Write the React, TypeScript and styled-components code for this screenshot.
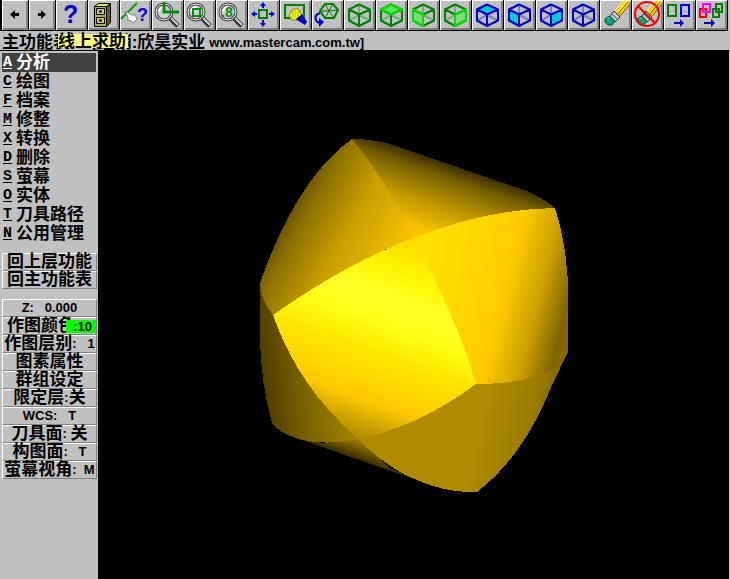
import React from "react";
import styled, { createGlobalStyle } from "styled-components";

const GlobalStyle = createGlobalStyle`
  * { box-sizing: border-box; }
  body { margin: 0; background: #000; }
`;

const uiFont = `"Liberation Sans", "Noto Sans CJK SC", sans-serif`;

const Window = styled.div`
  display: flex;
  flex-direction: column;
  min-height: 100vh;
  color: #000;
  background: #c0c0c0;
  font: bold 17px/17px ${uiFont};
`;

const Toolbar = styled.div`
  display: flex;
  height: 31px;
  border-left: 2px solid #000;
`;

const ToolButton = styled.button<{ $narrow?: boolean }>`
  flex: 0 0 ${(p) => (p.$narrow ? 27 : 32)}px;
  height: 31px;
  padding: 0;
  border: 0;
  border-right: 1px solid #000;
  border-bottom: 1px solid #000;
  background: #c0c0c0;
  box-shadow: inset 1px 1px #fff, inset -2px -2px #808080;
  overflow: hidden;
`;

const Icon = styled.svg`
  display: block;
  width: 32px;
  height: 30px;
`;

const StatusBar = styled.header`
  position: relative;
  display: flex;
  align-items: center;
  height: 19px;
  padding: 3px 2px 0;
  white-space: nowrap;
`;

const StatusTitle = styled.span`
  width: 90px;
`;

const Latin = styled.span`
  font-size: 13px;
`;

const Address = styled(Latin)`
  margin-left: 4px;
`;

const Tooltip = styled.span`
  position: absolute;
  left: 58px;
  top: 3px;
  width: 70px;
  height: 14px;
  line-height: 15px;
  background: #ffff80;
`;

const Body = styled.div`
  display: flex;
  flex: 1;
  margin-right: 1px;
`;

const Sidebar = styled.aside`
  flex: 0 0 98px;
  padding: 2px 1px 0 2px;
  border-top: 1px solid #000;
  background: #c0c0c0;
`;

const Menu = styled.nav`
  display: flex;
  flex-direction: column;
  padding-right: 1px;
`;

const MenuItem = styled.button<{ $active?: boolean }>`
  display: flex;
  align-items: center;
  gap: 4px;
  height: 19px;
  padding: 0 1px;
  border: 0;
  font: inherit;
  white-space: nowrap;
  color: ${(p) => (p.$active ? "#fff" : "#000")};
  background: ${(p) => (p.$active ? "#404040" : "transparent")};
`;

const Hotkey = styled.u`
  font: bold 15px/17px "Liberation Mono", monospace;
  text-underline-offset: 2px;
`;

const Group = styled.div`
  display: flex;
  flex-direction: column;
  margin-top: 10px;
`;

const PanelButton = styled.button`
  position: relative;
  display: flex;
  align-items: center;
  justify-content: center;
  height: 18px;
  padding: 0;
  border: 1px solid;
  border-color: #fff #808080 #808080 #fff;
  background: #c0c0c0;
  color: #000;
  font: inherit;
  line-height: 16px;
  white-space: pre;
`;

const ColorLabel = styled.span`
  flex: 1;
  padding-left: 4px;
  text-align: left;
`;

const Swatch = styled(Latin)`
  position: absolute;
  right: 0;
  top: 2px;
  width: 30px;
  height: 13px;
  padding-right: 4px;
  line-height: 13px;
  text-align: right;
  background: #00ff00;
`;

const Viewport = styled.main`
  display: flex;
  flex: 1;
  align-items: center;
  justify-content: center;
  background: #000;
`;

const Model = styled.svg`
  display: block;
  width: 310px;
  height: 356px;
`;

const GREEN = "#008000";
const LIME = "#00e000";
const BLUE = "#0000c0";

type Face = "top" | "left" | "right";

function Cube({ stroke, fill, face, accent }: { stroke: string; fill?: string; face?: Face; accent?: string }) {
  const faces: Record<Face, string> = {
    top: "M15 4.500 26 9.500 15 14.500 5 9.500Z",
    left: "M5 9.500 15 14.500V26L5 20.500Z",
    right: "M26 9.500 15 14.500V26L26 20.500Z",
  };
  return (
    <g fill="none" strokeWidth="2" strokeLinejoin="round">
      <path d="M15 4V15M5 20.500 15 15 26 20.500" stroke={stroke} opacity=".35" />
      {face && <path d={faces[face]} fill={fill} />}
      <path d="M15 4.500 26 9.500V20.500L15 26 5 20.500V9.500ZM5 9.500 15 14.500 26 9.500M15 14.500V26" stroke={stroke} />
      {face && accent && <path d={faces[face]} stroke={accent} />}
    </g>
  );
}

function Lens({ children }: { children?: React.ReactNode }) {
  return (
    <g fill="none">
      <path d="M18 18 26 26" stroke="#303030" strokeWidth="5" />
      <path d="M18 17 26 25" stroke="#d0d0d0" strokeWidth="2" />
      <circle cx="12" cy="12" r="8" fill="#d0d0d0" stroke="#404040" strokeWidth="3" />
      <circle cx="12" cy="12" r="8" stroke="#f0f0f0" strokeWidth="1" />
      <path d="M7 11A5 5 0 0 1 12 7" stroke="#fff" strokeWidth="2" />
      {children}
    </g>
  );
}

function Pencil() {
  return (
    <g>
      <path d="M14 12 23 1H31L19 17Z" fill="#ffd000" />
      <path d="M14 12 23 1M16 14 27 1" stroke="#fff080" />
      <path d="M19 17 30 4M17 15 28 2" stroke="#806000" />
      <path d="M10 16 14 11 20 17 15 22Z" fill="#c8c8c8" stroke="#303030" />
      <path d="M12 14 17 19M10 16 15 21" stroke="#505050" />
      <path d="M5 19 9 16 15 21 12 25H8L5 22Z" fill="#00a078" stroke="#005840" />
      <path d="M7 19 10 18" stroke="#60e0b0" />
    </g>
  );
}

const mark = { fontFamily: "Liberation Sans", fontWeight: 700 };

const viewTools: { label: string; icon: React.ReactNode }[] = [
  { label: "Help", icon: <text x="7" y="23" fontSize="25" fill="#0000d0" {...mark}>?</text> },
  {
    label: "File",
    icon: (
      <g stroke="#000">
        <path d="M6.500 6.500 10.500 3.500H22.500L18.500 6.500Z" fill="#e8e070" />
        <path d="M18.500 6.500 22.500 3.500V22.500L18.500 26.500Z" fill="#686000" />
        <path d="M6.500 6.500H18.500V26.500H6.500Z" fill="#b8b040" />
        <path d="M8.500 8.500H16.500V14.500H8.500ZM8.500 17.500H16.500V23.500H8.500Z" fill="#d0c858" />
        <path d="M11 11.500H14M11 20.500H14" strokeWidth="2" />
      </g>
    ),
  },
  {
    label: "Analyze",
    icon: (
      <g>
        <path d="M1 19 17 3" stroke="#00a000" strokeWidth="2" />
        <path d="M5 11 12 15 15 15 17 19 13 23 10 20 8 21 8 17Z" fill="#fff" stroke="#808080" />
        <text x="17" y="21" fontSize="18" fill="#0000e0" {...mark}>?</text>
      </g>
    ),
  },
  { label: "Zoom target", icon: <Lens><path d="M12 2V12H27" stroke="#009010" strokeWidth="3" /></Lens> },
  { label: "Zoom window", icon: <Lens><path d="M9 9H16V16H9Z" stroke="#009010" strokeWidth="2" /></Lens> },
  { label: "Zoom 0.8", icon: <Lens><text x="5" y="17" fontSize="14" fill="#009010" {...mark}>.8</text></Lens> },
  {
    label: "Fit",
    icon: (
      <g fill="none" strokeWidth="2">
        <path d="M11 10H19V18H11Z" stroke={GREEN} />
        <path d="M15 8V4M15 20V25M9 14H4M21 14H26" stroke="#0000e0" />
        <path d="M12 6 15 2 18 6ZM12 23 15 27 18 23ZM7 11 3 14 7 17ZM23 11 27 14 23 17Z" fill="#0000e0" />
      </g>
    ),
  },
  {
    label: "Repaint",
    icon: (
      <g>
        <path d="M5 5H24V18H5Z" fill="none" stroke={GREEN} strokeWidth="2" />
        <path d="M9 16 12 10 17 8 22 15 18 20 12 20Z" fill="#ffff00" stroke="#808000" />
        <path d="M13 11 12 18M15 10 15 18M18 11 18 17" stroke="#b0b000" />
        <path d="M16 19 22 14 24 17 27 22 25 25 20 22Z" fill="#0000d0" />
      </g>
    ),
  },
  {
    label: "Dynamic rotate",
    icon: (
      <g fill="none">
        <path d="M13 4H21L26 10 22 18H13L8 11Z" stroke={GREEN} strokeWidth="2" />
        <path d="M8 11H17L26 10M17 11 13 4M17 11 21 4M17 11 13 18M17 11 22 18" stroke={GREEN} />
        <path d="M8 13C1 15 3 22 8 23" stroke="#0000c0" strokeWidth="2" />
        <path d="M7 18 12 22 7 27Z" fill="#0000e0" />
      </g>
    ),
  },
  { label: "Isometric view", icon: <Cube stroke={GREEN} /> },
  { label: "Top view", icon: <Cube stroke={GREEN} face="top" fill="#60e060" accent={LIME} /> },
  { label: "Front view", icon: <Cube stroke={GREEN} face="left" fill="#80d880" accent={LIME} /> },
  { label: "Side view", icon: <Cube stroke={GREEN} face="right" fill="#80d880" accent={LIME} /> },
  { label: "Top plane", icon: <Cube stroke={BLUE} face="top" fill="#00c8d8" /> },
  { label: "Front plane", icon: <Cube stroke={BLUE} face="left" fill="#00c8d8" /> },
  { label: "Side plane", icon: <Cube stroke={BLUE} face="right" fill="#00c8d8" /> },
  { label: "3D plane", icon: <Cube stroke={BLUE} /> },
  { label: "Delete", icon: <Pencil /> },
  {
    label: "Undelete",
    icon: (
      <g>
        <Pencil />
        <g fill="none" stroke="#f00000" strokeWidth="2">
          <circle cx="15" cy="14" r="12" />
          <path d="M6 6 23 23" />
        </g>
      </g>
    ),
  },
  {
    label: "Change colour",
    icon: (
      <g fill="none" strokeWidth="2">
        <path d="M4 5H12V16H4Z" stroke={GREEN} />
        <path d="M17 5H25V16H17Z" stroke="#0000e0" />
        <path d="M10 23H17" stroke={BLUE} />
        <path d="M16 19 20 23 16 27Z" fill={BLUE} />
      </g>
    ),
  },
  {
    label: "Copy colour",
    icon: (
      <g fill="none" strokeWidth="2">
        <path d="M4 9H10V17H4Z" stroke="#f00000" />
        <path d="M7 4H14V12H7Z" stroke="#ff00ff" />
        <path d="M17 9H23V17H17ZM20 4H26V12H20Z" stroke={GREEN} />
        <path d="M8 23H16" stroke={BLUE} />
        <path d="M15 19 19 23 15 27Z" fill={BLUE} />
      </g>
    ),
  },
];

const menuItems = [
  ["A", "分析"],
  ["C", "绘图"],
  ["F", "档案"],
  ["M", "修整"],
  ["X", "转换"],
  ["D", "删除"],
  ["S", "萤幕"],
  ["O", "实体"],
  ["T", "刀具路径"],
  ["N", "公用管理"],
];

const settings: [string, string][] = [
  ["作图层别", ":   1"],
  ["图素属性", ""],
  ["群组设定", ""],
];

const planes: [string, string][] = [
  ["刀具面", ": "],
  ["构图面", ":   T"],
  ["萤幕视角", ":  M"],
];

function Solid() {
  return (
    <Model viewBox="259 137 310 356" shapeRendering="crispEdges" role="img" aria-label="Shaded solid">
      <defs>
        <linearGradient id="upperLeft" gradientUnits="userSpaceOnUse" x1="273" y1="216" x2="398" y2="285">
          <stop offset="0" stopColor="#4c3c00" />
          <stop offset=".2" stopColor="#8c7000" />
          <stop offset=".5" stopColor="#c79d00" />
          <stop offset=".85" stopColor="#f0bc00" />
          <stop offset="1" stopColor="#ffc800" />
        </linearGradient>
        <linearGradient id="upperRight" gradientUnits="userSpaceOnUse" x1="461" y1="164" x2="433" y2="246">
          <stop offset="0" stopColor="#2c2200" />
          <stop offset=".2" stopColor="#755d00" />
          <stop offset=".5" stopColor="#b89200" />
          <stop offset=".85" stopColor="#f5c000" />
          <stop offset="1" stopColor="#ffc800" />
        </linearGradient>
        <linearGradient id="right" gradientUnits="userSpaceOnUse" x1="430" y1="260" x2="570" y2="296">
          <stop offset="0" stopColor="#ffe000" />
          <stop offset=".55" stopColor="#ffcb00" />
          <stop offset=".8" stopColor="#cba000" />
          <stop offset="1" stopColor="#806500" />
        </linearGradient>
        <linearGradient id="center" gradientUnits="userSpaceOnUse" x1="420" y1="243" x2="352" y2="438">
          <stop offset="0" stopColor="#ffd900" />
          <stop offset=".16" stopColor="#fff500" />
          <stop offset=".3" stopColor="#ffff28" />
          <stop offset=".42" stopColor="#ffff18" />
          <stop offset=".56" stopColor="#ffe900" />
          <stop offset=".8" stopColor="#ffc900" />
          <stop offset="1" stopColor="#aa8700" />
        </linearGradient>
        <linearGradient id="lowerRight" gradientUnits="userSpaceOnUse" x1="480" y1="430" x2="568" y2="450">
          <stop offset="0" stopColor="#ae8b00" />
          <stop offset=".5" stopColor="#9c7c00" />
          <stop offset="1" stopColor="#665000" />
        </linearGradient>
        <linearGradient id="lowerLeft" gradientUnits="userSpaceOnUse" x1="260" y1="370" x2="350" y2="360">
          <stop offset="0" stopColor="#4c3c00" />
          <stop offset=".5" stopColor="#806600" />
          <stop offset="1" stopColor="#a58400" />
        </linearGradient>
        <linearGradient id="under" gradientUnits="userSpaceOnUse" x1="352" y1="459" x2="358" y2="442">
          <stop offset="0" stopColor="#302600" />
          <stop offset="1" stopColor="#947500" />
        </linearGradient>
      </defs>
      <path d="M390 225H435V260H390Z" fill="#ffce00" />
      <path d="M293 437 322 443 358 438 390 468 417 480Z" fill="url(#under)" />
      <path d="M260 283V340Q261 384 272 423Q280 433 293 437Q320 447 358 439L333 415Q293 370 273 315Z" fill="url(#lowerLeft)" />
      <path d="M475 384Q420 424 358 439Q385 467 417 480Q446 493 477 492Q524 456 552 385L568 352V310Z" fill="url(#lowerRight)" />
      <path d="M352 139Q297 178 260 283Q261 300 273 315Q347 263 417 236Q392 189 352 139Z" fill="url(#upperLeft)" />
      <path d="M352 139Q372 139 390 144L527 191Q543 198 555 208Q487 209 413 238Q392 189 352 139Z" fill="url(#upperRight)" />
      <path d="M555 208Q570 255 568 311Q564 345 557 367Q529 384 476 384Q457 318 413 238Q487 209 555 208Z" fill="url(#right)" />
      <path d="M273 315Q347 263 413 238Q457 318 476 384Q418 427 358 439Q298 387 273 315Z" fill="url(#center)" />
    </Model>
  );
}

export default function App() {
  return (
    <>
      <GlobalStyle />
      <Window>
        <Toolbar role="toolbar">
          <ToolButton $narrow aria-label="Back">
            <Icon viewBox="0 0 32 30">
              <path d="M8 14.500 13 10V13H17V16H13V19Z" />
            </Icon>
          </ToolButton>
          <ToolButton $narrow aria-label="Forward">
            <Icon viewBox="0 0 32 30">
              <path d="M17 14.500 12 10V13H9V16H12V19Z" />
            </Icon>
          </ToolButton>
          {viewTools.map((tool) => (
            <ToolButton key={tool.label} aria-label={tool.label}>
              <Icon viewBox="0 0 32 30">{tool.icon}</Icon>
            </ToolButton>
          ))}
        </Toolbar>
        <StatusBar>
          <StatusTitle>主功能表</StatusTitle>
          <span>[经销:欣昊实业</span>
          <Address>www.mastercam.com.tw]</Address>
          <Tooltip role="tooltip">线上求助</Tooltip>
        </StatusBar>
        <Body>
          <Sidebar>
            <Menu>
              {menuItems.map(([key, label], i) => (
                <MenuItem key={key} $active={i === 0}>
                  <Hotkey>{key}</Hotkey>
                  {label}
                </MenuItem>
              ))}
            </Menu>
            <Group>
              <PanelButton>回上层功能</PanelButton>
              <PanelButton>回主功能表</PanelButton>
            </Group>
            <Group>
              <PanelButton><Latin>Z:   0.000</Latin></PanelButton>
              <PanelButton>
                <ColorLabel>作图颜色</ColorLabel>
                <Swatch>:10</Swatch>
              </PanelButton>
              {settings.map(([label, value]) => (
                <PanelButton key={label}>{label}<Latin>{value}</Latin></PanelButton>
              ))}
              <PanelButton>限定层<Latin>:</Latin>关</PanelButton>
              <PanelButton><Latin>WCS:   T</Latin></PanelButton>
              {planes.map(([label, value], i) => (
                <PanelButton key={label}>{label}<Latin>{value}</Latin>{i === 0 && "关"}</PanelButton>
              ))}
            </Group>
          </Sidebar>
          <Viewport>
            <Solid />
          </Viewport>
        </Body>
      </Window>
    </>
  );
}
